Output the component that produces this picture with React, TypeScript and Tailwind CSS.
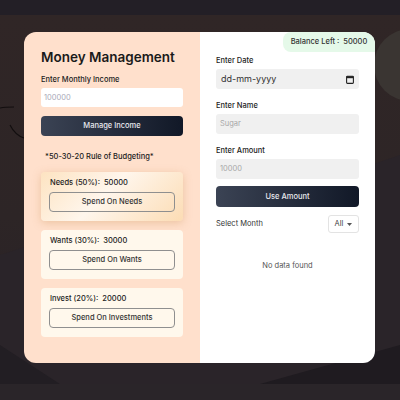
import React from 'react';

const font = { fontFamily: 'Inter, "Noto Sans", sans-serif' };

function Background() {
  return (
    <svg className="absolute inset-0" width="400" height="369" viewBox="0 0 400 369">
      <defs>
        <linearGradient id="bg" x1="0" y1="0" x2="0" y2="1">
          <stop offset="0" stopColor="#302626" />
          <stop offset="0.55" stopColor="#2d2526" />
          <stop offset="1" stopColor="#272127" />
        </linearGradient>
      </defs>
      <rect width="400" height="369" fill="url(#bg)" />
      <circle cx="410" cy="50" r="36" fill="#3a3532" />
      <path d="M0 240 C 120 200, 260 190, 400 140 L400 369 L0 369 Z" fill="#2a2429" />
      <path d="M260 369 L400 330 L400 369 Z" fill="#1f1b20" />
      <path d="M0 330 L60 369 L0 369 Z" fill="#221e23" />
      <path d="M0 93 C 5 92, 10 92, 14 92" stroke="#120e0f" strokeWidth="1.2" fill="none" />
      <path d="M10 110 C 13 116, 18 121, 24 123" stroke="#120e0f" strokeWidth="1.2" fill="none" />
    </svg>
  );
}

function OutlineButton({ label }: { label: string }) {
  return (
    <div className="flex h-[20px] items-center justify-center rounded-[4px] border border-[#8f8f8f] text-[7.5px] font-medium text-[#333]">
      {label}
    </div>
  );
}

function BudgetCard({ label, amount, button, highlight }: { label: string; amount: string; button: string; highlight?: boolean }) {
  return (
    <div
      className={
        highlight
          ? 'rounded-[4px] bg-[linear-gradient(135deg,#fde3c1_0%,#fff6ec_45%,#fcdcb4_100%)] px-[8px] pb-[9px] pt-[5px] shadow-[0_2px_8px_rgba(200,140,80,0.35)]'
          : 'rounded-[4px] bg-[#fff8ec] px-[8px] pb-[9px] pt-[5px]'
      }
    >
      <div className="mb-[3px] pl-[1px] text-[7.5px] font-medium leading-[12px] text-[#222]">
        {label}:&nbsp; {amount}
      </div>
      <OutlineButton label={button} />
    </div>
  );
}

function Field({ label, placeholder, className }: { label: string; placeholder: string; className?: string }) {
  return (
    <div className={className}>
      <div className="text-[7.5px] font-medium leading-[12px] text-[#222]">{label}</div>
      <div className="mt-[2px] flex h-[20px] items-center rounded-[3px] bg-[#f0f0f0] px-[4px] text-[7.5px] text-[#a8a8a8]">
        {placeholder}
      </div>
    </div>
  );
}

export default function App() {
  return (
    <div className="relative h-[400px] w-[400px] overflow-hidden bg-[#2a2529]" style={font}>
      <div className="h-[15px] bg-[#231f26]" />
      <div className="relative h-[369px]">
        <Background />
        <div className="relative ml-[24px] flex h-[331px] w-[351px]" style={{ top: 17 }}>
          {/* left panel */}
          <div className="w-[176px] rounded-l-[12px] bg-[#ffe0cc] px-[17px] pt-[15px]">
            <h1 className="whitespace-nowrap text-[13.5px] font-semibold leading-[20px] text-[#1a1a1a]">Money Management</h1>
            <div className="mt-[7px] text-[7.5px] font-medium leading-[12px] text-[#222]">Enter Monthly Income</div>
            <div className="mt-[2px] flex h-[19px] items-center rounded-[3px] bg-white px-[3px] text-[7.5px] text-[#a9a9b8]">
              100000
            </div>
            <div className="mt-[9px] flex h-[20px] items-center justify-center rounded-[4px] bg-[linear-gradient(90deg,#3b4354,#111827)] text-[7.5px] font-medium text-[#e8e8ee]">
              Manage Income
            </div>
            <div className="mt-[15px] pl-[4px] text-[7.5px] font-medium leading-[12px] text-[#222]">
              *50-30-20 Rule of Budgeting*
            </div>
            <div className="mt-[9px] flex flex-col gap-[9px]">
              <BudgetCard label="Needs (50%)" amount="50000" button="Spend On Needs" highlight />
              <BudgetCard label="Wants (30%)" amount="30000" button="Spend On Wants" />
              <BudgetCard label="Invest (20%)" amount="20000" button="Spend On Investments" />
            </div>
          </div>
          {/* right panel */}
          <div className="relative w-[175px] rounded-r-[12px] bg-white px-[16px] pt-[23px]">
            <div className="absolute right-0 top-0 flex h-[20px] w-[92px] items-center justify-center rounded-bl-[8px] rounded-tl-[8px] rounded-tr-[12px] bg-[#e5f9e9] text-[7.5px] font-medium text-[#333]">
              Balance Left :&nbsp; 50000
            </div>
            <div className="text-[7.5px] font-medium leading-[12px] text-[#222]">Enter Date</div>
            <div className="mt-[2px] flex h-[20px] items-center justify-between rounded-[3px] bg-[#f0f0f0] px-[5px] text-[9px] text-[#333]">
              <span>dd-mm-yyyy</span>
              <svg width="8" height="9" viewBox="0 0 8 9">
                <rect x="0.6" y="1.2" width="6.8" height="7.2" rx="0.8" fill="none" stroke="#222" strokeWidth="1.1" />
                <rect x="0.6" y="1.2" width="6.8" height="2" fill="#222" />
              </svg>
            </div>
            <Field label="Enter Name" placeholder="Sugar" className="mt-[11px]" />
            <Field label="Enter Amount" placeholder="10000" className="mt-[11px]" />
            <div className="mt-[7px] flex h-[21px] items-center justify-center rounded-[4px] bg-[linear-gradient(90deg,#3b4354,#111827)] text-[7.5px] font-medium text-[#e8e8ee]">
              Use Amount
            </div>
            <div className="mt-[8px] flex items-center justify-between">
              <span className="text-[7.5px] text-[#333]">Select Month</span>
              <div className="flex h-[18px] w-[31px] items-center justify-center gap-[4px] rounded-[3px] border border-[#e3e3e3] text-[7.5px] text-[#444]">
                All
                <svg width="5" height="3" viewBox="0 0 5 3">
                  <path d="M0 0 L5 0 L2.5 3 Z" fill="#555" />
                </svg>
              </div>
            </div>
            <div className="mt-[27px] text-center text-[7.5px] text-[#555]">No data found</div>
          </div>
        </div>
      </div>
    </div>
  );
}
